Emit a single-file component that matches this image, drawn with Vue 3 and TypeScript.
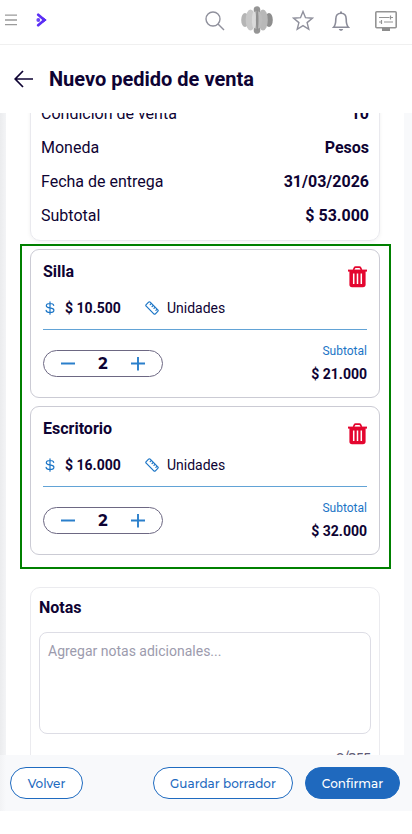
<script setup lang="ts">
interface SummaryRow {
  label: string
  value: string
}

interface OrderItem {
  name: string
  price: string
  unit: string
  quantity: number
  subtotal: string
}

const summary: SummaryRow[] = [
  { label: 'Condición de venta', value: '10' },
  { label: 'Moneda', value: 'Pesos' },
  { label: 'Fecha de entrega', value: '31/03/2026' },
  { label: 'Subtotal', value: '$ 53.000' },
]

const items: OrderItem[] = [
  { name: 'Silla', price: '$ 10.500', unit: 'Unidades', quantity: 2, subtotal: '$ 21.000' },
  { name: 'Escritorio', price: '$ 16.000', unit: 'Unidades', quantity: 2, subtotal: '$ 32.000' },
]
</script>

<template>
  <div class="app">
    <header class="topbar">
      <svg class="menu" width="12" height="12" viewBox="0 0 12 12">
        <path d="M0 1.200h12M0 6h12M0 10.600h12" stroke="#9b9b9b" stroke-width="1.300" />
      </svg>
      <svg class="brand" width="12" height="14" viewBox="0 0 12 14">
        <path d="M2.200 1.800 8.400 7 2.200 12.200" fill="none" stroke="#5b2ef5" stroke-width="2.700" stroke-linecap="round" stroke-linejoin="round" />
        <path d="M6 4.200 10.200 7 6 9.800 7 7z" fill="#5b2ef5" stroke="#5b2ef5" stroke-linejoin="round" />
        <circle cx="2.300" cy="7" r="1.900" fill="#6a45f5" />
      </svg>
      <div class="tools">
        <svg class="search" width="20" height="20" viewBox="0 0 20 20" fill="none" stroke="#8f909c" stroke-width="1.400">
          <circle cx="8" cy="8" r="7" />
          <path d="m13 13 6 6" />
        </svg>
        <svg class="orb" width="32" height="28" viewBox="0 0 32 28">
          <ellipse cx="4" cy="14" rx="3.800" ry="7" fill="#b5b5b5" />
          <ellipse cx="28" cy="14" rx="3.800" ry="7" fill="#8e8e8e" />
          <ellipse cx="22" cy="14" rx="4.800" ry="10.500" fill="#b8b8b8" />
          <ellipse cx="9.500" cy="14" rx="4.800" ry="10.500" fill="#c8c8c8" />
          <ellipse cx="16" cy="4" rx="3.300" ry="3.800" fill="#959595" />
          <ellipse cx="16" cy="24" rx="3.300" ry="3.800" fill="#959595" />
          <ellipse cx="16" cy="14" rx="5.200" ry="9" fill="#bcbcbc" />
          <ellipse cx="13" cy="14" rx="2.200" ry="8.500" fill="#dadada" />
          <ellipse cx="16.200" cy="14" rx="1.300" ry="11" fill="#8f8f8f" />
        </svg>
        <svg class="star" width="22" height="21" viewBox="0 0 22 21" fill="none" stroke="#8f909c" stroke-width="1.400">
          <path d="m11 1.500 2.500 6.200 6.800.5-5.200 4.400 1.700 6.700-5.800-3.700-5.800 3.700 1.700-6.700L1.700 8.200l6.800-.5z" />
        </svg>
        <svg class="bell" width="18" height="21" viewBox="0 0 18 21">
          <path d="M9 2.200c-3.500 0-5.200 2.500-5.200 5.800 0 4.600-.6 6.600-2.200 8.200h14.800c-1.600-1.600-2.200-3.600-2.200-8.200 0-3.300-1.700-5.800-5.200-5.800Z" fill="none" stroke="#8b8c99" stroke-width="1.600" />
          <path d="M9 .6v2" stroke="#8b8c99" stroke-width="2" />
          <path d="M6.800 18h4.400c-.3 1.200-1.100 1.800-2.200 1.800S7.100 19.200 6.800 18Z" fill="#8b8c99" />
        </svg>
        <svg class="panel-icon" width="22" height="20" viewBox="0 0 22 20">
          <rect x=".8" y=".8" width="20.400" height="16" rx="1" fill="none" stroke="#949494" stroke-width="1.600" />
          <path d="M7 17h8v3H7z" fill="#8d8d8d" />
          <path d="M4 6.500h10.500M15.500 6.500h2.500M15.500 4.500v4M4 11h2.500M9 11h9M6.500 9v4" fill="none" stroke="#949494" stroke-width="1.200" />
        </svg>
      </div>
    </header>

    <div class="titlebar">
      <svg width="20" height="18" viewBox="0 0 20 18" fill="none" stroke="#0e0333" stroke-width="1.700">
        <path d="M1.200 9H19M9 1 1.200 9 9 17" />
      </svg>
      <h1>Nuevo pedido de venta</h1>
    </div>

    <div class="workspace">
      <main class="content">
        <section class="summary">
          <div v-for="row in summary" :key="row.label" class="summary-row">
            <span>{{ row.label }}</span>
            <strong>{{ row.value }}</strong>
          </div>
        </section>

        <section class="items">
          <article v-for="item in items" :key="item.name" class="item">
            <div class="item-head">
              <h2>{{ item.name }}</h2>
              <svg class="trash" width="19" height="22" viewBox="0 0 19 22">
                <path d="M5.500 4 6.300 2.200Q6.800 1.200 7.600 1.200h3.800q.8 0 1.300 1L13.500 4" fill="none" stroke="#e4062f" stroke-width="1.700" />
                <path d="M0 3.600h19v2H0z" fill="#e4062f" />
                <path d="M1.400 5h16.200v13.600q0 2.700-2.700 2.700H4.100q-2.700 0-2.700-2.700z" fill="#e4062f" />
                <path d="M5.700 7.500V18M9.500 7.500V18M13.300 7.500V18" stroke="#fff" stroke-width="1.500" />
              </svg>
            </div>
            <div class="item-info">
              <svg class="dollar" width="14" height="14" viewBox="0 0 14 14" fill="none" stroke="#1b75c6" stroke-width="1.200" stroke-linecap="round">
                <path d="M7 .8v12.400M10.700 4.300C10.400 3 9.300 2.500 7 2.500S3.300 3.300 3.300 4.700C3.300 8 10.900 5.800 10.900 9.200c0 1.500-1.400 2.300-3.900 2.300s-3.700-.8-3.900-2.200" />
              </svg>
              <strong>{{ item.price }}</strong>
              <svg class="ruler" width="14" height="14" viewBox="0 0 14 14" fill="none" stroke="#1b75c6" stroke-width="1.200" stroke-linejoin="round" stroke-linecap="round">
                <path d="M1.200 3.600 3.600 1.200q.8-.8 1.600 0l7.600 7.600q.8.800 0 1.600l-2.400 2.400q-.8.800-1.600 0L1.200 5.200q-.8-.8 0-1.600ZM6.400 2.400 5.200 3.600M8.300 4.300 7.100 5.500M10.200 6.200 9 7.400M12.100 8.100 10.900 9.300" />
              </svg>
              <span>{{ item.unit }}</span>
            </div>
            <div class="item-foot">
              <div class="stepper">
                <svg width="14" height="14" viewBox="0 0 14 14"><path d="M0 6.500h14" stroke="#2a7fcb" stroke-width="2" /></svg>
                <b>{{ item.quantity }}</b>
                <svg width="14" height="14" viewBox="0 0 14 14"><path d="M0 6.500h14M7 0v13.500" stroke="#2a7fcb" stroke-width="1.900" /></svg>
              </div>
              <div class="item-total">
                <span>Subtotal</span>
                <strong>{{ item.subtotal }}</strong>
              </div>
            </div>
          </article>
        </section>

        <section class="notes">
          <h2>Notas</h2>
          <textarea placeholder="Agregar notas adicionales..."></textarea>
          <div class="counter">0/255</div>
        </section>
      </main>
    </div>

    <footer class="actions">
      <button class="btn back">Volver</button>
      <button class="btn draft">Guardar borrador</button>
      <button class="btn primary">Confirmar</button>
    </footer>
  </div>
</template>

<style>
body {
  background: #fff;
  overflow: hidden;
}
</style>

<style scoped>
* {
  box-sizing: border-box;
}
.app {
  width: 412px;
  height: 834px;
  display: flex;
  flex-direction: column;
  font-family: Roboto, sans-serif;
  color: #0e0333;
  background: #fff;
}
svg {
  display: block;
  flex: none;
}
h1,
h2 {
  margin: 0;
  font-weight: 700;
}
.topbar {
  height: 45px;
  flex: none;
  display: flex;
  align-items: center;
  padding: 0 15px 4px 5px;
  border-bottom: 1px solid #f0f0f0;
}
.brand {
  margin-left: 19px;
}
.tools {
  margin-left: auto;
  display: flex;
  align-items: center;
}
.search {
  margin: 2px 16px 0 0;
}
.orb {
  margin-right: 19px;
}
.star {
  margin-right: 18px;
}
.bell {
  margin: 2px 25px 0 0;
}
.panel-icon {
  margin-top: 2px;
}
.titlebar {
  height: 68px;
  flex: none;
  display: flex;
  align-items: center;
  gap: 15px;
  padding-left: 14px;
}
.titlebar h1 {
  font-size: 20px;
  line-height: 24px;
}
.workspace {
  height: 642px;
  flex: none;
  overflow: hidden;
  padding: 0 8px 0 6px;
  background: linear-gradient(90deg, #ebecee 0, #f3f4f6 6px, #f8f9fb 8px, #f8f9fb 100%);
}
.content {
  height: 642px;
  background: #fff;
  padding: 0 13px 0 14px;
  display: flex;
  flex-direction: column;
}
.summary {
  flex: none;
  margin: -26px 11px 3px 10px;
  padding: 8px 10px;
  border: 1px solid #e9e9ee;
  border-radius: 10px;
  box-shadow: 0 1px 4px rgba(0, 0, 0, 0.06);
  font-size: 16px;
}
.summary-row {
  height: 34px;
  display: flex;
  align-items: center;
  justify-content: space-between;
}
.items {
  flex: none;
  border: 2px solid #008000;
  background: #fff;
  padding: 3px 9px 12px 8px;
  display: flex;
  flex-direction: column;
  gap: 8px;
}
.item {
  height: 149px;
  border: 1px solid #cbcbd4;
  border-radius: 9px;
  padding: 0 12px;
}
.item-head {
  height: 42px;
  display: flex;
  justify-content: space-between;
}
.item-head h2 {
  font-size: 16px;
  line-height: 20px;
  margin-top: 12px;
}
.trash {
  margin-top: 16px;
}
.item-info {
  height: 38px;
  display: flex;
  align-items: center;
  padding-bottom: 5px;
  border-bottom: 1px solid #62a3d6;
  font-size: 14px;
}
.item-info strong {
  margin-left: 8px;
  width: 80px;
}
.item-info span {
  margin-left: 8px;
}
.item-foot {
  display: flex;
  justify-content: space-between;
}
.stepper {
  width: 120px;
  height: 27px;
  margin-top: 20px;
  border: 1px solid #6d6883;
  border-radius: 14px;
  display: flex;
  align-items: center;
  justify-content: space-between;
  padding: 0 17px;
}
.stepper b {
  font: 700 16px/20px Montserrat, sans-serif;
}
.item-total {
  display: flex;
  flex-direction: column;
  align-items: flex-end;
  margin-top: 13px;
}
.item-total span {
  font-size: 12px;
  line-height: 16px;
  color: #1b75c6;
}
.item-total strong {
  font-size: 14px;
  line-height: 20px;
  margin-top: 5px;
}
.notes {
  flex: none;
  margin: 18px 11px 0 10px;
  height: 210px;
  border: 1px solid #ebebef;
  border-radius: 10px;
  padding: 10px 8px;
}
.notes h2 {
  font-size: 16px;
  line-height: 20px;
}
.notes textarea {
  display: block;
  width: 332px;
  height: 102px;
  margin-top: 14px;
  padding: 8px;
  border: 1px solid #dddde5;
  border-radius: 8px;
  font: 14px/20px Roboto, sans-serif;
  background: #fff;
  resize: none;
}
.notes textarea::placeholder {
  color: #9c9bad;
  opacity: 1;
}
.counter {
  margin-top: 15px;
  text-align: right;
  font: 500 13px/16px Montserrat, sans-serif;
  color: #5f5b75;
}
.actions {
  height: 56px;
  flex: none;
  display: flex;
  align-items: center;
  padding: 0 12px 0 10px;
  background: linear-gradient(90deg, #f2f3f5 0, #f8f9fb 6px);
}
.btn {
  height: 32px;
  padding: 0;
  border: 1px solid #1f6bc0;
  border-radius: 16px;
  background: #fff;
  color: #1f6bc0;
  font: 500 12px Montserrat, Inter, sans-serif;
  white-space: nowrap;
}
.back {
  width: 73px;
}
.draft {
  width: 140px;
  margin-left: auto;
}
.primary {
  width: 95px;
  margin-left: 12px;
  background: #1f69be;
  color: #fff;
}
</style>
